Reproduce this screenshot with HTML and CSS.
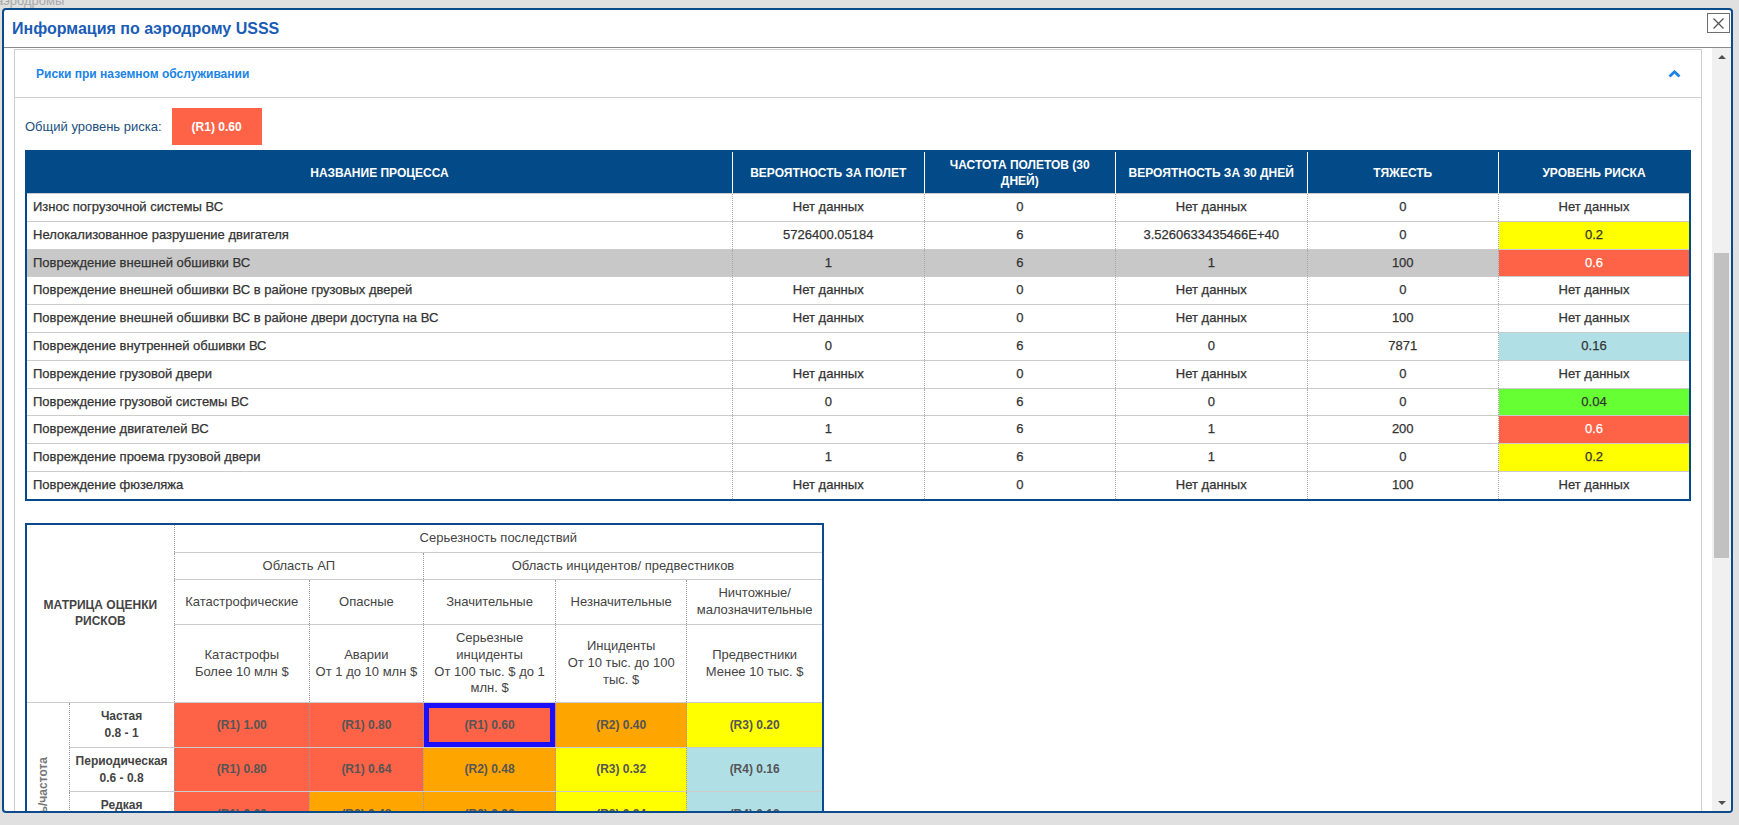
FILE: index.html
```html
<!DOCTYPE html>
<html lang="ru">
<head>
<meta charset="utf-8">
<title>Информация по аэродрому USSS</title>
<link rel="stylesheet" href="styles.css">
</head>
<body>
<div class="backdrop-text">аэродромы</div>
<div class="modal">
  <div class="modal-header">
    <h1 class="modal-title">Информация по аэродрому USSS</h1>
    <button class="close-btn" type="button" aria-label="Закрыть">
      <svg width="13" height="13" viewBox="0 0 13 13"><path d="M1.5 1.5 L11.5 11.5 M11.5 1.5 L1.5 11.5" stroke="#555" stroke-width="1.3" fill="none"/></svg>
    </button>
  </div>
  <div class="modal-body">
    <div class="scroll-area">
      <div class="panel">
        <div class="panel-heading">
          <span class="panel-title">Риски при наземном обслуживании</span>
          <svg class="chevron" width="13" height="8" viewBox="0 0 13 8"><polyline points="1.5,6.5 6.5,1.8 11.5,6.5" fill="none" stroke="#1a84e6" stroke-width="2.8"/></svg>
        </div>
        <div class="panel-body">
          <div class="overall">
            <span class="overall-label">Общий уровень риска:</span>
            <span class="badge">(R1) 0.60</span>
          </div>

          <table class="risk-table">
            <thead>
              <tr>
                <th class="col-name">НАЗВАНИЕ ПРОЦЕССА</th>
                <th class="col-num">ВЕРОЯТНОСТЬ ЗА ПОЛЕТ</th>
                <th class="col-num">ЧАСТОТА ПОЛЕТОВ (30 ДНЕЙ)</th>
                <th class="col-num">ВЕРОЯТНОСТЬ ЗА 30 ДНЕЙ</th>
                <th class="col-num">ТЯЖЕСТЬ</th>
                <th class="col-num">УРОВЕНЬ РИСКА</th>
              </tr>
            </thead>
            <tbody>
              <tr><td class="name">Износ погрузочной системы ВС</td><td>Нет данных</td><td>0</td><td>Нет данных</td><td>0</td><td>Нет данных</td></tr>
              <tr><td class="name">Нелокализованное разрушение двигателя</td><td>5726400.05184</td><td>6</td><td>3.5260633435466E+40</td><td>0</td><td class="lvl lvl-r3">0.2</td></tr>
              <tr class="row-active"><td class="name">Повреждение внешней обшивки ВС</td><td>1</td><td>6</td><td>1</td><td>100</td><td class="lvl lvl-r1">0.6</td></tr>
              <tr><td class="name">Повреждение внешней обшивки ВС в районе грузовых дверей</td><td>Нет данных</td><td>0</td><td>Нет данных</td><td>0</td><td>Нет данных</td></tr>
              <tr><td class="name">Повреждение внешней обшивки ВС в районе двери доступа на ВС</td><td>Нет данных</td><td>0</td><td>Нет данных</td><td>100</td><td>Нет данных</td></tr>
              <tr><td class="name">Повреждение внутренней обшивки ВС</td><td>0</td><td>6</td><td>0</td><td>7871</td><td class="lvl lvl-r4">0.16</td></tr>
              <tr><td class="name">Повреждение грузовой двери</td><td>Нет данных</td><td>0</td><td>Нет данных</td><td>0</td><td>Нет данных</td></tr>
              <tr><td class="name">Повреждение грузовой системы ВС</td><td>0</td><td>6</td><td>0</td><td>0</td><td class="lvl lvl-r5">0.04</td></tr>
              <tr><td class="name">Повреждение двигателей ВС</td><td>1</td><td>6</td><td>1</td><td>200</td><td class="lvl lvl-r1">0.6</td></tr>
              <tr><td class="name">Повреждение проема грузовой двери</td><td>1</td><td>6</td><td>1</td><td>0</td><td class="lvl lvl-r3">0.2</td></tr>
              <tr><td class="name">Повреждение фюзеляжа</td><td>Нет данных</td><td>0</td><td>Нет данных</td><td>100</td><td>Нет данных</td></tr>
            </tbody>
          </table>

          <table class="matrix">
            <colgroup>
              <col class="mc-axis"><col class="mc-label"><col class="mc-1"><col class="mc-2"><col class="mc-3"><col class="mc-4"><col class="mc-5">
            </colgroup>
            <tr>
              <th class="m-title" colspan="2" rowspan="4">МАТРИЦА ОЦЕНКИ РИСКОВ</th>
              <th colspan="5">Серьезность последствий</th>
            </tr>
            <tr>
              <th colspan="2">Область АП</th>
              <th colspan="3">Область инцидентов/ предвестников</th>
            </tr>
            <tr>
              <th>Катастрофические</th>
              <th>Опасные</th>
              <th>Значительные</th>
              <th>Незначительные</th>
              <th>Ничтожные/ малозначительные</th>
            </tr>
            <tr>
              <th>Катастрофы<br>Более 10 млн $</th>
              <th>Аварии<br>От 1 до 10 млн $</th>
              <th>Серьезные инциденты<br>От 100 тыс. $ до 1 млн. $</th>
              <th>Инциденты<br>От 10 тыс. до 100 тыс. $</th>
              <th>Предвестники<br>Менее 10 тыс. $</th>
            </tr>
            <tr>
              <td class="m-axis" rowspan="5"><span>Вероятность/частота</span></td>
              <td class="m-label">Частая<br>0.8 - 1</td>
              <td class="m-r1">(R1) 1.00</td>
              <td class="m-r1">(R1) 0.80</td>
              <td class="m-r1 m-selected">(R1) 0.60</td>
              <td class="m-r2">(R2) 0.40</td>
              <td class="m-r3">(R3) 0.20</td>
            </tr>
            <tr>
              <td class="m-label">Периодическая<br>0.6 - 0.8</td>
              <td class="m-r1">(R1) 0.80</td>
              <td class="m-r1">(R1) 0.64</td>
              <td class="m-r2">(R2) 0.48</td>
              <td class="m-r3">(R3) 0.32</td>
              <td class="m-r4">(R4) 0.16</td>
            </tr>
            <tr>
              <td class="m-label">Редкая<br>0.4 - 0.6</td>
              <td class="m-r1">(R1) 0.60</td>
              <td class="m-r2">(R2) 0.48</td>
              <td class="m-r2">(R2) 0.36</td>
              <td class="m-r3">(R3) 0.24</td>
              <td class="m-r4">(R4) 0.12</td>
            </tr>
            <tr>
              <td class="m-label">Маловероятная<br>0.2 - 0.4</td>
              <td class="m-r2">(R2) 0.40</td>
              <td class="m-r3">(R3) 0.32</td>
              <td class="m-r3">(R3) 0.24</td>
              <td class="m-r4">(R4) 0.16</td>
              <td class="m-r4">(R4) 0.08</td>
            </tr>
            <tr>
              <td class="m-label">Крайне маловероятная<br>0 - 0.2</td>
              <td class="m-r3">(R3) 0.20</td>
              <td class="m-r4">(R4) 0.16</td>
              <td class="m-r4">(R4) 0.12</td>
              <td class="m-r5">(R5) 0.08</td>
              <td class="m-r5">(R5) 0.04</td>
            </tr>
          </table>
        </div>
      </div>
    </div>
    <div class="scrollbar">
      <div class="sb-btn"><span class="sb-arrow-up"></span></div>
      <div class="sb-track"><div class="sb-thumb"></div></div>
      <div class="sb-btn"><span class="sb-arrow-down"></span></div>
    </div>
  </div>
</div>
</body>
</html>
```

FILE: styles.css
```css
* { box-sizing: border-box; }

html, body {
  margin: 0;
  height: 100%;
}

body {
  position: relative;
  overflow: hidden;
  background: #e0e0e0;
  font-family: "Liberation Sans", Arial, sans-serif;
  padding: 8px 0 0 2px;
}

.backdrop-text {
  position: absolute;
  left: -4px;
  top: -6px;
  font-size: 13px;
  line-height: 13px;
  color: #a9a9a9;
}

.modal {
  position: relative;
  width: 1731px;
  height: 805px;
  border: 2px solid #0b4b8b;
  border-radius: 4px;
  background: #fff;
  display: flex;
  flex-direction: column;
  overflow: hidden;
}

.modal-header {
  flex: none;
  height: 38px;
  display: flex;
  justify-content: space-between;
  align-items: center;
  padding: 0 1px 0 8px;
  border-bottom: 1px solid #8a8a8a;
}

.modal-title {
  margin: 0;
  font-size: 16px;
  font-weight: bold;
  color: #1a5cb6;
}

.close-btn {
  align-self: flex-start;
  margin-top: 3px;
  width: 23px;
  height: 20px;
  padding: 0;
  border: 1px solid #6e6e6e;
  background: #fff;
  display: flex;
  align-items: center;
  justify-content: center;
}

.modal-body {
  flex: 1;
  min-height: 0;
  display: flex;
}

.scroll-area {
  flex: 1;
  min-width: 0;
  overflow: hidden;
  padding: 1px 10px 0 10px;
}

.panel {
  border: 1px solid #cfcfcf;
}

.panel-heading {
  height: 48px;
  display: flex;
  align-items: center;
  justify-content: space-between;
  padding: 0 20px 0 21px;
  border-bottom: 1px solid #cfcfcf;
}

.panel-title {
  font-size: 12px;
  font-weight: bold;
  color: #1a84e6;
}

.panel-body {
  padding: 10px;
}

.overall {
  display: flex;
  align-items: center;
  gap: 10px;
}

.overall-label {
  font-size: 13px;
  color: #214f7e;
}

.badge {
  width: 90px;
  height: 37px;
  display: flex;
  align-items: center;
  justify-content: center;
  background: #ff6347;
  color: #fff;
  font-size: 12px;
  font-weight: bold;
}

/* Main risk table */
.risk-table {
  width: 100%;
  margin-top: 5px;
  border-collapse: collapse;
  table-layout: fixed;
  border: 2px solid #024b88;
  font-size: 13px;
}

.risk-table th {
  background: #024b88;
  color: #fff;
  font-size: 12px;
  font-weight: bold;
  line-height: 16px;
  padding: 4.5px 8px;
  text-align: center;
  border-left: 1px solid #fff;
}

.risk-table th.col-num { width: 191.5px; }

.risk-table td {
  padding: 5px 6px;
  line-height: 16.8px;
  text-align: center;
  color: #333;
  font-weight: normal;
  -webkit-text-stroke: 0.25px #333;
  border-top: 1px solid #cccccc;
  border-left: 1px dotted #a8a8a8;
  white-space: nowrap;
}

.risk-table td.name { text-align: left; }

.risk-table tbody tr.row-active td { background: #c8c8c8; }

.risk-table tbody tr td.lvl-r1 { background: #ff6347; color: #fff; -webkit-text-stroke-color: #fff; }
.risk-table tbody tr td.lvl-r3 { background: #ffff00; }
.risk-table tbody tr td.lvl-r4 { background: #b0e0e6; }
.risk-table tbody tr td.lvl-r5 { background: #66ff33; }

/* Risk matrix */
.matrix {
  width: 799px;
  margin-top: 22px;
  border-collapse: collapse;
  table-layout: fixed;
  border: 2px solid #0b4b8b;
  font-size: 12px;
  color: #444;
}

.mc-axis { width: 43px; }
.mc-label { width: 105px; }
.mc-1 { width: 135px; }
.mc-2 { width: 114px; }
.mc-3 { width: 132px; }
.mc-4 { width: 131px; }
.mc-5 { width: 136px; }

.matrix th,
.matrix td {
  padding: 5px 4px;
  line-height: 16.8px;
  text-align: center;
  border-top: 1px solid #cccccc;
  border-left: 1px dotted #9a9a9a;
}

.matrix th {
  font-weight: normal;
  font-size: 13px;
}

.matrix th.m-title {
  font-weight: bold;
  font-size: 12px;
}

.matrix td {
  font-weight: bold;
  color: #555;
}

.matrix td.m-label { color: #444; }

.matrix td.m-axis {
  padding: 0 8px 0 0;
  color: #777;
}

.m-axis span {
  display: inline-block;
  writing-mode: vertical-rl;
  transform: rotate(180deg);
}

.m-r1 { background: #ff6347; }
.m-r2 { background: #ffa500; }
.m-r3 { background: #ffff00; }
.m-r4 { background: #b0e0e6; }
.m-r5 { background: #66ff33; }

.m-selected { box-shadow: inset 0 0 0 5px #1c10fa; }

/* Fake scrollbar */
.scrollbar {
  flex: none;
  width: 19px;
  background: #f0f0f0;
  display: flex;
  flex-direction: column;
}

.sb-btn {
  flex: none;
  height: 17px;
  display: flex;
  align-items: center;
  justify-content: center;
}

.sb-arrow-up {
  width: 0;
  height: 0;
  border-left: 4px solid transparent;
  border-right: 4px solid transparent;
  border-bottom: 4px solid #505050;
}

.sb-arrow-down {
  width: 0;
  height: 0;
  border-left: 4px solid transparent;
  border-right: 4px solid transparent;
  border-top: 4px solid #505050;
}

.sb-track {
  flex: 1;
  padding: 188px 2px 0 2px;
}

.sb-thumb {
  height: 305px;
  background: #c1c1c1;
}
```
